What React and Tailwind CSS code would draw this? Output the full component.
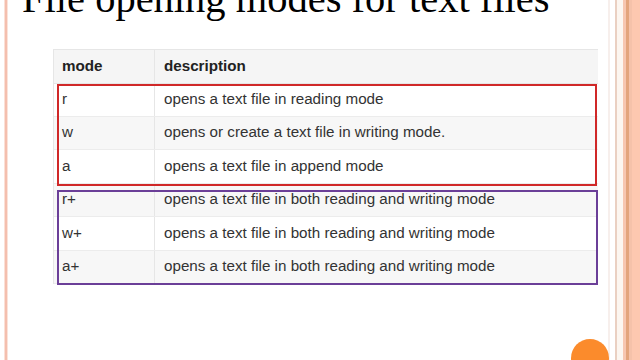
import React from "react";

const rows = [
  { m: "r", d: "opens a text file in reading mode", h: 33, bg: "bg-white" },
  { m: "w", d: "opens or create a text file in writing mode.", h: 33, bg: "bg-[#f7f7f7]" },
  { m: "a", d: "opens a text file in append mode", h: 34, bg: "bg-white" },
  { m: "r+", d: "opens a text file in both reading and writing mode", h: 33, bg: "bg-[#f7f7f7]" },
  { m: "w+", d: "opens a text file in both reading and writing mode", h: 34, bg: "bg-white" },
  { m: "a+", d: "opens a text file in both reading and writing mode", h: 33, bg: "bg-[#f7f7f7]" },
];

export default function App() {
  return (
    <div className="relative flex w-[640px] h-[360px] overflow-hidden bg-white">
      {/* left stripe */}
      <div className="w-[4px] bg-white" />
      <div className="w-[1px] bg-[#fbe0d6]" />
      <div className="w-[2px] bg-[#f4bfae]" />
      <div className="w-[1px] bg-[#fbe3da]" />

      {/* main content */}
      <div className="w-[596px] flex flex-col">
        <div
          className="mt-[-21px] pl-[14px] text-[40.5px] leading-none text-black whitespace-nowrap"
          style={{ fontFamily: '"Liberation Serif", serif' }}
        >
          File opening modes for text files
        </div>
        <div
          className="relative ml-[45px] mt-[29px] w-[545px] border-l border-t border-[#e6e6e6] text-[15.2px] text-[#333]"
          style={{ fontFamily: '"Liberation Sans", Arial, sans-serif' }}
        >
          <div className="flex h-[34px] items-center bg-[#f5f5f5] border-b border-[#e6e6e6]">
            <div className="w-[101px] h-full flex items-center pl-[8px] font-bold text-[#222] border-r border-[#e6e6e6]">
              mode
            </div>
            <div className="flex-1 pl-[9px] font-bold text-[#222]">description</div>
          </div>
          {rows.map((r, i) => (
            <div
              key={i}
              className={`flex items-center ${r.bg} border-b border-[#ececec]`}
              style={{ height: r.h }}
            >
              <div className="w-[101px] h-full flex items-center pl-[8px] border-r border-[#e6e6e6]">
                {r.m}
              </div>
              <div className="flex-1 pl-[9px]">{r.d}</div>
            </div>
          ))}
          {/* red group outline */}
          <div className="absolute left-[3px] top-[34px] w-[540px] h-[102px] border-2 border-[#d02828]" />
          {/* purple group outline */}
          <div className="absolute left-[3px] top-[140px] w-[541px] h-[95px] border-2 border-[#6b3f98]" />
        </div>
      </div>

      {/* right decoration */}
      <div className="w-[4px] bg-white" />
      <div className="w-[2px] bg-[#f7efec]" />
      <div className="w-[5px] bg-white" />
      <div className="w-[2px] bg-[#ead0c2]" />
      <div className="w-[6px] bg-[#fcf6f0]" />
      <div className="w-[3px] bg-[#f7c6b0]" />
      <div className="w-[3px] bg-[#e3a47c]" />
      <div className="w-[3px] bg-[#f5c2aa]" />
      <div className="flex-1 bg-[#fdc8b0]" />

      {/* orange circle */}
      <div className="absolute left-[571px] top-[339px] w-[38px] h-[38px] rounded-full bg-[#fb8b2c]" />
    </div>
  );
}
